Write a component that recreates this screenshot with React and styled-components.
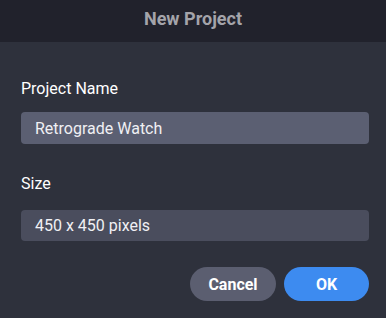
import React from 'react';
import styled, { createGlobalStyle } from 'styled-components';

const GlobalStyle = createGlobalStyle`
  html, body {
    margin: 0;
    padding: 0;
    background: #2e313c;
  }
  body {
    font-family: Roboto, "Liberation Sans", sans-serif;
  }
`;

const Dialog = styled.div`
  width: 386px;
  height: 318px;
  background: #2e313c;
  display: flex;
  flex-direction: column;
`;

const Header = styled.div`
  height: 42px;
  background: #21222c;
  display: flex;
  align-items: center;
  justify-content: center;
  color: #a4a4aa;
  font-size: 18px;
  font-weight: 700;
  padding-bottom: 5px;
  box-sizing: border-box;
`;

const Body = styled.div`
  padding: 37px 17px 0 21px;
  display: flex;
  flex-direction: column;
`;

const Label = styled.div`
  color: #ffffff;
  font-size: 16px;
  font-weight: 400;
  line-height: 19px;
  margin-top: ${p => p.$top || 0}px;
`;

const Field = styled.div`
  height: ${p => p.$h}px;
  margin-top: ${p => p.$gap}px;
  background: ${p => p.$bg};
  border-radius: 4px;
  display: flex;
  align-items: center;
  padding-left: 14px;
  color: #f0f0f4;
  font-size: 16px;
`;

const Actions = styled.div`
  display: flex;
  justify-content: flex-end;
  gap: 8px;
  margin-top: 26px;
`;

const Button = styled.button`
  border: none;
  height: 34px;
  width: ${p => p.$w}px;
  border-radius: 17px;
  background: ${p => p.$bg};
  color: #fff;
  font-family: Roboto, "Liberation Sans", sans-serif;
  font-size: 16px;
  font-weight: 700;
  padding: 0;
`;

export default function App() {
  return (
    <Dialog>
      <GlobalStyle />
      <Header>New Project</Header>
      <Body>
        <Label>Project Name</Label>
        <Field $h={32} $gap={14} $bg="#5b5f72">Retrograde Watch</Field>
        <Label $top={30}>Size</Label>
        <Field $h={31} $gap={17} $bg="#4a4d5d">450 x 450 pixels</Field>
        <Actions>
          <Button $w={86} $bg="#5b5e70">Cancel</Button>
          <Button $w={85} $bg="#3d8bf0">OK</Button>
        </Actions>
      </Body>
    </Dialog>
  );
}
